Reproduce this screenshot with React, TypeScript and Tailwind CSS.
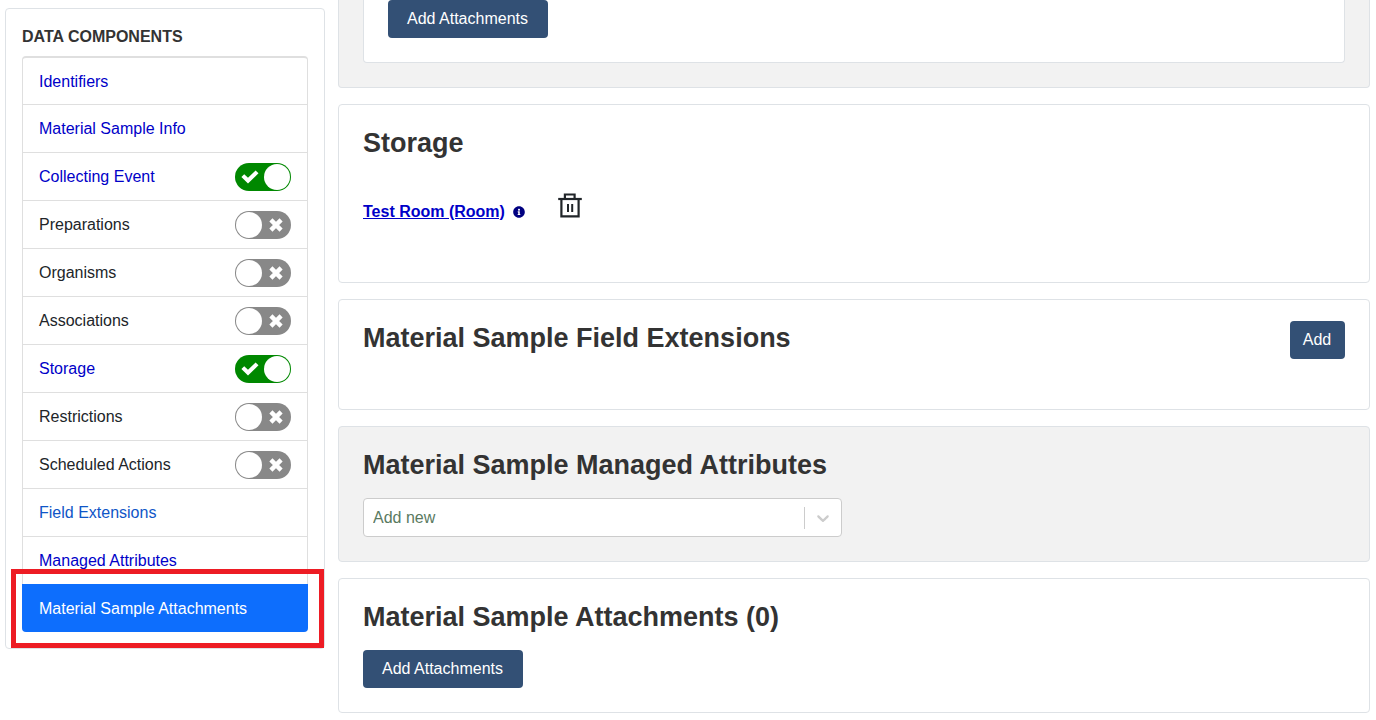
import { useState } from "react";
import type { ReactNode } from "react";
import { FaInfoCircle } from "react-icons/fa";

type Component = {
  label: string;
  tone: string;
  toggle?: boolean;
  enabled?: boolean;
};

const components: Component[] = [
  { label: "Identifiers", tone: "text-[#0000c8]" },
  { label: "Material Sample Info", tone: "text-[#0000c8]" },
  { label: "Collecting Event", tone: "text-[#0000c8]", toggle: true, enabled: true },
  { label: "Preparations", tone: "text-[#212529]", toggle: true },
  { label: "Organisms", tone: "text-[#212529]", toggle: true },
  { label: "Associations", tone: "text-[#212529]", toggle: true },
  { label: "Storage", tone: "text-[#0000c8]", toggle: true, enabled: true },
  { label: "Restrictions", tone: "text-[#212529]", toggle: true },
  { label: "Scheduled Actions", tone: "text-[#212529]", toggle: true },
  { label: "Field Extensions", tone: "text-[#0f56c7]" },
  { label: "Managed Attributes", tone: "text-[#0000c8]" },
];

function CheckIcon() {
  return (
    <svg viewBox="0 0 18 14" className="h-3.5 w-[18px]" fill="white" aria-hidden="true">
      <path d="M0.4 7L3.2 4.2L7 7.8L14.6 0.4L17.5 3.3L7 13.5Z" />
    </svg>
  );
}

function CrossIcon() {
  return (
    <svg viewBox="0 0 14 14" className="size-3.5" fill="none" aria-hidden="true">
      <path d="M1.9 1.9L12.1 12.1M12.1 1.9L1.9 12.1" stroke="white" strokeWidth="4.4" />
    </svg>
  );
}

function Toggle({ label, initial }: { label: string; initial: boolean }) {
  const [on, setOn] = useState(initial);
  return (
    <span className="grid h-7 w-14 items-center">
      <input
        type="checkbox"
        role="switch"
        aria-label={label}
        checked={on}
        onChange={() => setOn(!on)}
        className="col-start-1 row-start-1 h-7 w-14 cursor-pointer appearance-none rounded-full bg-[#888888] checked:bg-[#008800]"
      />
      <span
        className={
          on
            ? "pointer-events-none col-start-1 row-start-1 flex flex-row-reverse items-center justify-between p-px pl-1.5"
            : "pointer-events-none col-start-1 row-start-1 flex items-center justify-between p-px pr-2"
        }
      >
        <span className="size-[26px] rounded-full bg-white" />
        {on ? <CheckIcon /> : <CrossIcon />}
      </span>
    </span>
  );
}

function ActionButton({ children, wide }: { children: ReactNode; wide?: boolean }) {
  return (
    <button
      type="button"
      className={
        wide
          ? "h-[38px] w-40 rounded bg-[#335075] pr-px pb-px text-base text-white"
          : "h-[38px] w-[55px] rounded bg-[#335075] pr-px pb-px text-base text-white"
      }
    >
      {children}
    </button>
  );
}

function Heading({ children }: { children: ReactNode }) {
  return <h2 className="text-[27px] leading-9 font-bold text-[#333333]">{children}</h2>;
}

function TrashIcon() {
  return (
    <svg viewBox="0 0 24 25" className="h-[25px] w-6" fill="none" stroke="#212529" strokeWidth="2.2" aria-hidden="true">
      <path d="M0.2 6H23.8" />
      <path d="M6.9 6V1.5H16.6V6" />
      <path d="M3.4 6V23.4H20.6V6" />
      <path d="M10 11V19M14.2 11V19" strokeWidth="2" />
    </svg>
  );
}

export default function App() {
  return (
    <div className="flex items-start gap-[13px] bg-white pr-1.5 pl-[5px] font-['Liberation_Sans',Arial,sans-serif] text-base text-[#212529]">
      <nav aria-labelledby="components-title" className="mt-2 w-80 shrink-0 rounded border border-[#dee2e6] p-4">
        <h3 id="components-title" className="mb-2 leading-6 font-bold text-[#333333]">
          DATA COMPONENTS
        </h3>
        <ul className="-mt-px rounded-t border border-t-2 border-b-0 border-[#dfdfdf]">
          {components.map(({ label, tone, toggle, enabled }, index) => (
            <li
              key={label}
              className={
                index === 0
                  ? "flex h-[46px] items-center justify-between px-4 pt-0.5"
                  : "flex h-12 items-center justify-between border-t border-[#dfdfdf] px-4"
              }
            >
              <a href="#" className={tone}>
                {label}
              </a>
              {toggle && <Toggle label={label} initial={Boolean(enabled)} />}
            </li>
          ))}
        </ul>
        <div className="relative flex h-12 items-center rounded-b bg-[#0d6efd] px-[17px] pt-px">
          <a href="#" aria-current="true" className="text-white">
            Material Sample Attachments
          </a>
          <span className="pointer-events-none absolute -top-[15px] -right-4 -bottom-4 -left-[11px] border-[5px] border-[#ed1c24]" />
        </div>
      </nav>

      <main className="flex min-w-0 grow flex-col gap-4">
        <section className="rounded-b border border-t-0 border-[#dee2e6] bg-[#f2f2f2] px-6 pb-6">
          <div className="rounded-b border border-t-0 border-[#dee2e6] bg-white px-6 pb-6">
            <ActionButton wide>Add Attachments</ActionButton>
          </div>
        </section>

        <section className="rounded border border-[#dee2e6] px-6 pt-5 pb-[58px]">
          <Heading>Storage</Heading>
          <div className="flex items-start pt-8">
            <div className="flex items-center gap-2 pt-[7px]">
              <a href="#" className="font-bold text-[#0000c8] underline">
                Test Room (Room)
              </a>
              <FaInfoCircle className="size-3 text-[#000080]" />
            </div>
            <button type="button" aria-label="Remove storage" className="ml-[33px]">
              <TrashIcon />
            </button>
          </div>
        </section>

        <section className="flex items-start justify-between rounded border border-[#dee2e6] px-6 pt-5 pb-[50px]">
          <Heading>Material Sample Field Extensions</Heading>
          <div className="pt-px">
            <ActionButton>Add</ActionButton>
          </div>
        </section>

        <section className="rounded border border-[#dee2e6] bg-[#f2f2f2] px-6 pt-5 pb-6">
          <Heading>Material Sample Managed Attributes</Heading>
          <div className="grid grid-cols-2 gap-6 pt-[15px]">
            <div className="grid">
              <select
                aria-label="Add new managed attribute"
                className="col-start-1 row-start-1 h-[39px] appearance-none rounded border border-[#cccccc] bg-white px-[9px] text-base text-[#5a7a5f]"
              >
                <option>Add new</option>
              </select>
              <span className="pointer-events-none col-start-1 row-start-1 flex items-center justify-self-end pr-[9px]">
                <span className="mr-2 h-[22px] w-px bg-[#cccccc]" />
                <svg viewBox="0 0 20 20" className="size-5" fill="#cccccc" aria-hidden="true">
                  <path d="M4.516 7.548c0.436-0.446 1.043-0.481 1.576 0l3.908 3.747 3.908-3.747c0.533-0.481 1.141-0.446 1.574 0 0.436 0.445 0.408 1.197 0 1.615-0.406 0.418-4.695 4.502-4.695 4.502-0.217 0.223-0.502 0.335-0.787 0.335s-0.57-0.112-0.789-0.335c0 0-4.287-4.084-4.695-4.502s-0.436-1.17 0-1.615z" />
                </svg>
              </span>
            </div>
          </div>
        </section>

        <section className="rounded border border-[#dee2e6] px-6 pt-5 pb-6">
          <Heading>Material Sample Attachments (0)</Heading>
          <div className="flex pt-[15px]">
            <ActionButton wide>Add Attachments</ActionButton>
          </div>
        </section>
      </main>
    </div>
  );
}
